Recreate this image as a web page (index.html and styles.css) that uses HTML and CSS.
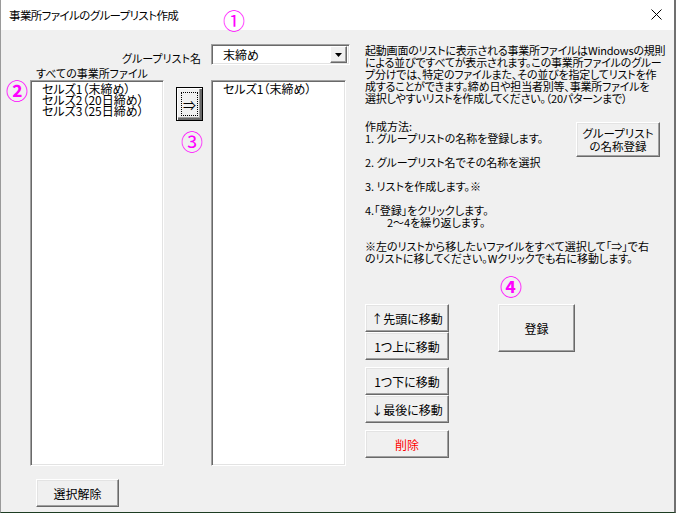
FILE: index.html
```html
<!DOCTYPE html>
<html lang="ja">
<head>
    <meta charset="UTF-8">
    <title>事業所ファイルのグループリスト作成</title>
    <link rel="stylesheet" href="styles.css">
</head>
<body>
    <div class="window">
        <div class="titlebar">
            <span class="title">事業所ファイルのグループリスト作成</span>
            <svg class="close" width="11" height="11" viewBox="0 0 11 11">
                <path d="M0.5 0.5 L10.5 10.5 M10.5 0.5 L0.5 10.5" stroke="#000" stroke-width="1" fill="none"/>
            </svg>
        </div>

        <div class="client">
            <div class="lists-pane">
                <div class="group-label">グループリスト名</div>
                <div class="combo">
                    <span class="combo-text">末締め</span>
                    <span class="combo-btn">
                        <svg width="7" height="4" viewBox="0 0 7 4"><path d="M0 0 H7 L3.5 4 Z" fill="#000"/></svg>
                    </span>
                </div>
                <div class="all-label">すべての事業所ファイル</div>
                <ul class="listbox list-all">
                    <li>セルズ1（末締め）</li>
                    <li>セルズ2（20日締め）</li>
                    <li>セルズ3（25日締め）</li>
                </ul>
                <div class="move-col">
                    <button class="btn arrow-btn"><span class="focus-rect">⇒</span></button>
                </div>
                <ul class="listbox list-group">
                    <li>セルズ1（末締め）</li>
                </ul>
                <button class="btn clear-btn">選択解除</button>
            </div>

            <div class="info-pane">
                <p class="desc">
                    起動画面のリストに表示される事業所ファイルはWindowsの規則<br>
                    による並びですべてが表示されます。この事業所ファイルのグルー<br>
                    プ分けでは、特定のファイルまた、その並びを指定してリストを作<br>
                    成することができます。締め日や担当者別等、事業所ファイルを<br>
                    選択しやすいリストを作成してください。（20パターンまで）
                </p>

                <div class="howto">
                    <div class="steps">
                        <p>作成方法:<br>1. グループリストの名称を登録します。</p>
                        <p>2. グループリスト名でその名称を選択</p>
                        <p>3. リストを作成します。※</p>
                        <p>4.「登録」をクリックします。<br><span class="indent">2～4を繰り返します。</span></p>
                        <p>※左のリストから移したいファイルをすべて選択して「⇒」で右<br>のリストに移してください。Wクリックでも右に移動します。</p>
                    </div>
                    <button class="btn name-btn">グループリスト<br>の名称登録</button>
                </div>

                <div class="actions">
                    <div class="order-btns">
                        <div class="btn-group">
                            <button class="btn order-btn">↑先頭に移動</button>
                            <button class="btn order-btn">1つ上に移動</button>
                        </div>
                        <div class="btn-group">
                            <button class="btn order-btn">1つ下に移動</button>
                            <button class="btn order-btn">↓最後に移動</button>
                        </div>
                        <button class="btn order-btn delete-btn">削除</button>
                    </div>
                    <button class="btn save-btn">登録</button>
                </div>
            </div>
        </div>

        <!-- annotation markers -->
        <span class="marker m1">①</span>
        <span class="marker m2">②</span>
        <span class="marker m3">③</span>
        <span class="marker m4">④</span>
    </div>
</body>
</html>
```

FILE: styles.css
```css
body {
    margin: 0;
    padding: 0;
    background-color: #f0f0f0;
    font-family: "Noto Sans CJK JP", "Noto Sans", sans-serif;
    font-size: 12px;
    font-feature-settings: "palt";
    color: #000;
}
.window {
    position: relative;
    width: 676px;
    height: 513px;
    box-sizing: border-box;
    background-color: #f0f0f0;
    border-left: 1px solid #9a9a9a;
    border-right: 2px solid #707070;
    border-bottom: 1px solid #1d3d22;
    overflow: hidden;
}
.titlebar {
    height: 30px;
    background-color: #fff;
    display: flex;
    align-items: center;
    justify-content: space-between;
    padding: 0 12px 0 8px;
}
.title {
    font-size: 11.5px;
    letter-spacing: -0.6px;
    line-height: 14px;
}
.close {
    display: block;
    margin-top: -1px;
}
.client {
    display: flex;
    padding: 14px 0 0 29px;
}

/* left side: combo + two lists */
.lists-pane {
    display: grid;
    grid-template-columns: 134px 47px 139px;
    grid-template-rows: 21px 15px 386px auto;
}
.group-label {
    grid-column: 1 / 3;
    text-align: right;
    padding-right: 10px;
    align-self: end;
    font-size: 11px;
    line-height: 14px;
}
.combo {
    display: flex;
    align-items: center;
    justify-content: space-between;
    background-color: #fff;
    border: 1px solid;
    border-color: #a0a0a0 #fff #fff #a0a0a0;
    box-shadow: inset 1px 1px #696969, inset -1px -1px #e3e3e3;
    padding: 0 2px 0 11px;
}
.combo-text {
    line-height: 14px;
}
.combo-btn {
    width: 15px;
    height: 15px;
    display: flex;
    align-items: center;
    justify-content: center;
    background-color: #f0f0f0;
    border: 1px solid;
    border-color: #fff #696969 #696969 #fff;
    box-shadow: inset -1px -1px #a0a0a0;
}
.combo-btn svg {
    display: block;
}
.all-label {
    grid-column: 1;
    padding-left: 6px;
    font-size: 11px;
    line-height: 14px;
    align-self: end;
    white-space: nowrap;
}
.listbox {
    list-style: none;
    margin: 0;
    padding: 2px 0 0 10px;
    background-color: #fff;
    border: 1px solid;
    border-color: #a0a0a0 #fff #fff #a0a0a0;
    box-shadow: inset 1px 1px #696969, inset -1px -1px #e3e3e3;
}
.listbox li {
    line-height: 11px;
    padding-left: 1px;
    white-space: nowrap;
}
.list-all {
    grid-column: 1;
}
.list-group {
    grid-column: 3;
    width: 135px;
    box-sizing: border-box;
}
.move-col {
    grid-column: 2;
    padding: 7px 0 0 12px;
}

/* classic 3d buttons */
.btn {
    font-family: inherit;
    font-size: 12px;
    font-feature-settings: "palt";
    color: #000;
    background-color: #f0f0f0;
    border: 1px solid;
    border-color: #fff #696969 #696969 #fff;
    box-shadow: inset -1px -1px #a0a0a0, inset 1px 1px #e3e3e3;
    padding: 0;
    line-height: 13px;
    box-sizing: border-box;
}
.arrow-btn {
    width: 27px;
    height: 34px;
    border: 1px solid #000;
    box-shadow: inset 1px 1px #fff, inset -2px -2px #696969, inset -3px -3px #a0a0a0;
    display: flex;
    padding: 4px;
}
.focus-rect {
    flex: 1;
    display: flex;
    align-items: center;
    justify-content: center;
    border: 1px dotted #000;
    font-size: 13px;
}
.clear-btn {
    grid-column: 1;
    width: 83px;
    height: 28px;
    margin: 13px 0 0 6px;
}

/* right side: description and actions */
.info-pane {
    margin-left: 15px;
    width: 303px;
}
.desc {
    margin: 0;
    font-size: 11px;
    letter-spacing: -0.2px;
    line-height: 12px;
    white-space: nowrap;
}
.howto {
    display: flex;
    justify-content: space-between;
    margin-top: 16px;
}
.steps {
    flex: 1;
    min-width: 0;
}
.steps p {
    margin: 0 0 12px 0;
    font-size: 11px;
    line-height: 12px;
    white-space: nowrap;
}
.steps p:last-child {
    margin-bottom: 0;
}
.indent {
    padding-left: 22px;
}
.name-btn {
    flex-shrink: 0;
    width: 84px;
    height: 35px;
    margin: 2px 8px 0 0;
    font-size: 11.5px;
    line-height: 13px;
}
.actions {
    display: flex;
    align-items: flex-start;
    margin-top: 40px;
}
.order-btns {
    display: flex;
    flex-direction: column;
    gap: 7px;
    width: 84px;
}
.btn-group {
    display: flex;
    flex-direction: column;
}
.order-btn {
    width: 84px;
    height: 28px;
}
.delete-btn {
    color: #ff0000;
}
.save-btn {
    width: 77px;
    height: 48px;
    margin-left: 49px;
}

/* circled annotation numbers laid over the dialog */
.marker {
    position: absolute;
    color: #ff00ff;
    font-size: 22px;
    line-height: 22px;
}
.m1 { left: 222px; top: 8px; }
.m2 { left: 5px; top: 78px; font-weight: bold; }
.m3 { left: 180px; top: 129px; }
.m4 { left: 499px; top: 274px; font-weight: bold; }
```
